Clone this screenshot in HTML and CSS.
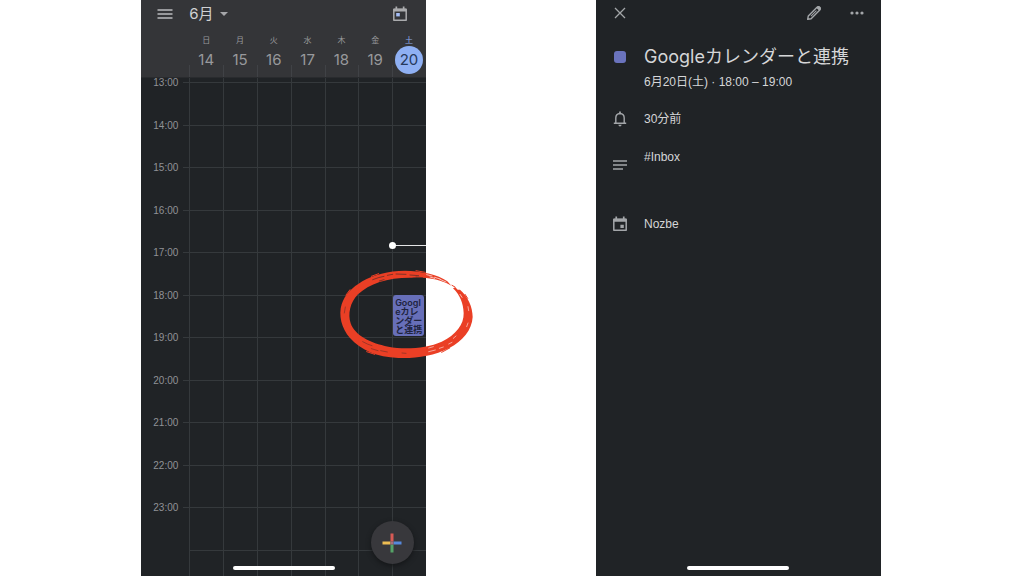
FILE: index.html
```html
<!DOCTYPE html>
<html lang="ja">
<head>
    <meta charset="utf-8">
    <meta name="viewport" content="width=device-width, initial-scale=1">
    <title>Googleカレンダーと連携</title>
    <link rel="stylesheet" href="styles.css">
</head>
<body>
    <main class="page">
        <section class="phone week">
            <header class="week-header">
                <div class="toolbar">
                    <button type="button" class="icon-button" aria-label="メニュー">
                        <svg width="16" height="12" viewBox="0 0 16 12"><path d="M0.5 2h15M0.5 6h15M0.5 10h15" stroke="#98999c" stroke-width="1.8"/></svg>
                    </button>
                    <button type="button" class="month-button">6月
                        <svg width="8" height="4" viewBox="0 0 8 4"><path d="M0 0h8L4 4z" fill="#a5a6a9"/></svg>
                    </button>
                    <button type="button" class="icon-button today-button" aria-label="今日">
                        <svg width="16" height="16" viewBox="0 0 16 16">
                            <path d="M1.8 3.5h12.4v10.7H1.8z" fill="none" stroke="#aaabad" stroke-width="1.5" stroke-linejoin="round"/>
                            <path d="M1.5 2.5h13v3h-13zM3.5 0.5h1.7v3H3.5zM10.8 0.5h1.7v3h-1.7z" fill="#aaabad"/>
                            <path d="M4.2 7h3.6v3.4H4.2z" fill="#a4bdf5"/>
                        </svg>
                    </button>
                </div>
                <div class="days">
                    <div class="day"><span class="day-name">日</span><span class="day-number">14</span></div>
                    <div class="day"><span class="day-name">月</span><span class="day-number">15</span></div>
                    <div class="day"><span class="day-name">火</span><span class="day-number">16</span></div>
                    <div class="day"><span class="day-name">水</span><span class="day-number">17</span></div>
                    <div class="day"><span class="day-name">木</span><span class="day-number">18</span></div>
                    <div class="day"><span class="day-name">金</span><span class="day-number">19</span></div>
                    <div class="day today"><span class="day-name">土</span><span class="day-number">20</span></div>
                </div>
            </header>

            <div class="schedule">
                <div class="hours">
                    <div class="hour"><span>13:00</span></div>
                    <div class="hour"><span>14:00</span></div>
                    <div class="hour"><span>15:00</span></div>
                    <div class="hour"><span>16:00</span></div>
                    <div class="hour"><span>17:00</span></div>
                    <div class="hour"><span>18:00</span></div>
                    <div class="hour"><span>19:00</span></div>
                    <div class="hour"><span>20:00</span></div>
                    <div class="hour"><span>21:00</span></div>
                    <div class="hour"><span>22:00</span></div>
                    <div class="hour"><span>23:00</span></div>
                    <div class="hour-end"></div>
                </div>
                <div class="columns">
                    <div class="column"></div>
                    <div class="column"></div>
                    <div class="column"></div>
                    <div class="column"></div>
                    <div class="column"></div>
                    <div class="column"></div>
                    <div class="column column-today">
                        <div class="now-line"></div>
                        <div class="event">Googleカレンダーと連携</div>
                        <svg class="marker" width="150" height="130" viewBox="0 0 450 390">
                            <!-- brush ring -->
                            <path fill="#ea3f25" d="M364 152 C335 135 295 126 245 128 C175 127 118 145 84 178 C60 202 53 238 62 265 C74 300 120 325 175 335 C225 344 290 340 335 320 C378 300 402 268 401 235 C400 205 390 180 369 160 L376 157 L383 164 L390 164 C414 185 428 215 428 246 C426 285 398 318 358 339 C310 364 255 371 205 369 C140 366 92 345 60 309 C34 280 25 240 35 208 C45 178 66 158 97 139 C130 119 175 108 225 107 C270 108 325 118 352 139 Z"/>
                            <path fill="none" stroke="#ea3f25" stroke-width="3" stroke-linecap="round" d="M48 180l12-16M124 124l22-8M110 350l24 8M335 352l24-13M366 151l9 5M405 178l8 12M258 107l28 5"/>
                            <!-- dry bristle streaks -->
                            <g fill="none" stroke="#4a2a26" stroke-width="2" stroke-linecap="round">
                                <path d="M128 134q20-8 34-10M172 121l16-3M198 117l30 1M240 120l26 2M148 138l14-4M258 126l20 2"/>
                                <path d="M46 216l-3 18M98 320q16 9 28 12M124 341l20 6M152 347l20 4M216 354l12 1" stroke-width="1.4"/>
                            </g>
                            <g fill="none" stroke="#fff" stroke-width="2" stroke-linecap="round">
                                <path d="M290 119l16 4M300 126l14 4M314 127l16 5M330 133l18 8M340 143l12 5M390 178l6 9"/>
                                <path d="M414 215l2 12M414 264l-4 11M366 322l-10 5M340 336l-12 4M316 345l-20 5M296 339l14-4M378 303l-8 7" stroke-width="1.6"/>
                            </g>
                        </svg>
                    </div>
                </div>
            </div>

            <button type="button" class="add-button" aria-label="予定を追加">
                <svg width="20" height="20" viewBox="0 0 20 20">
                    <path d="M8.5 0.5h3v8h-3z" fill="#d65a55"/>
                    <path d="M0.5 8.5h8v3h-8z" fill="#edbd52"/>
                    <path d="M11.5 8.5h8v3h-8z" fill="#5688dc"/>
                    <path d="M8.5 11.5h3v8h-3z" fill="#55a267"/>
                    <path d="M8.5 8.5h3v3h-3z" fill="#a66f7c"/>
                </svg>
            </button>
            <div class="home-bar"></div>
        </section>

        <section class="phone detail">
            <div class="detail-toolbar">
                <button type="button" class="icon-button" aria-label="閉じる">
                    <svg width="12" height="12" viewBox="0 0 12 12"><path d="M1 1l10 10M11 1L1 11" stroke="#a3a6a9" stroke-width="1.3"/></svg>
                </button>
                <button type="button" class="icon-button edit-button" aria-label="編集">
                    <svg width="16" height="16" viewBox="0 0 16 16">
                        <path d="M1.7 14.3l.6-3.4L11 2.2q1.2-1.1 2.4 0l.4.4q1.1 1.2 0 2.4L5.1 13.7z" fill="none" stroke="#a3a6a9" stroke-width="1.4" stroke-linejoin="round"/>
                        <path d="M10.2 2.8l1.6-1.5q1-.7 2 .2l.8.8q.8 1 .1 1.9l-1.5 1.6zM4.6 10.7l5.5-5.5.7.7-5.5 5.5z" fill="#a3a6a9"/>
                    </svg>
                </button>
                <button type="button" class="icon-button" aria-label="その他">
                    <svg width="14" height="4" viewBox="0 0 14 4"><g fill="#a3a6a9"><circle cx="2" cy="2" r="1.6"/><circle cx="7" cy="2" r="1.6"/><circle cx="12" cy="2" r="1.6"/></g></svg>
                </button>
            </div>

            <div class="row title-row">
                <span class="color-chip"></span>
                <h1>Googleカレンダーと連携</h1>
                <p class="date">6月20日(土) · 18:00 – 19:00</p>
            </div>
            <div class="row">
                <svg width="14" height="16" viewBox="0 0 14 16">
                    <path d="M2.8 12V7q0-4.2 4.2-4.5Q11.2 2.8 11.2 7v5M0.8 12.3h12.4" fill="none" stroke="#a3a6a9" stroke-width="1.4"/>
                    <path d="M6.1 0.6h1.8v2.2H6.1zM5.3 13.7h3.4q-.4 1.7-1.7 1.7t-1.7-1.7z" fill="#a3a6a9"/>
                </svg>
                <p>30分前</p>
            </div>
            <div class="row note-row">
                <svg width="16" height="12" viewBox="0 0 16 12"><path d="M1 2h14M1 6h14M1 10h10" stroke="#a3a6a9" stroke-width="1.5"/></svg>
                <p>#Inbox</p>
            </div>
            <div class="row">
                <svg width="16" height="16" viewBox="0 0 16 16">
                    <path d="M1.8 3.5h12.4v10.7H1.8z" fill="none" stroke="#a3a6a9" stroke-width="1.5" stroke-linejoin="round"/>
                    <path d="M1.5 2.5h13v3.3h-13zM3.4 0.5h1.7v3H3.4zM10.9 0.5h1.7v3h-1.7zM8.4 8.7h3.4v3.2H8.4z" fill="#a3a6a9"/>
                </svg>
                <p>Nozbe</p>
            </div>
            <div class="home-bar"></div>
        </section>
    </main>
</body>
</html>
```
FILE: styles.css
```css
* {
    box-sizing: border-box;
}

body {
    margin: 0;
    background-color: #fff;
    font-family: Inter, "Noto Sans CJK JP", sans-serif;
}

button {
    margin: 0;
    padding: 0;
    border: none;
    background: none;
    color: inherit;
    font: inherit;
    cursor: pointer;
}

svg {
    display: block;
}

h1, p {
    margin: 0;
    font-weight: 400;
}

.page {
    display: grid;
    grid-template-columns: 1fr 1fr;
    column-gap: 23%;
    padding: 0 14% 0 13.8%;
    min-height: 100vh;
}

.phone {
    position: relative;
    background-color: #202326;
    color: #d5d6d8;
}

.home-bar {
    position: absolute;
    bottom: 6px;
    left: 50%;
    width: 102px;
    height: 4px;
    margin-left: -51px;
    border-radius: 2px;
    background-color: #fff;
}

.icon-button {
    display: flex;
    align-items: center;
    justify-content: center;
    width: 24px;
    height: 24px;
}

/* Week view */
.week {
    display: flex;
    flex-direction: column;
}

.week-header {
    height: 78px;
    border-bottom: 1px solid #292b2e;
    background-color: #343538;
}

.toolbar {
    display: flex;
    align-items: center;
    height: 28px;
    padding: 0 14px 0 12px;
}

.month-button {
    display: flex;
    align-items: center;
    gap: 6px;
    margin-left: 12px;
    font-size: 15px;
    line-height: 24px;
    color: #d0d1d3;
}

.today-button {
    margin-left: auto;
}

.days {
    display: grid;
    grid-template-columns: repeat(7, 1fr);
    height: 49px;
    padding: 7px 0 0 48px;
}

.day {
    position: relative;
    display: flex;
    flex-direction: column;
    align-items: center;
    color: #98999c;
}

.day::before {
    content: "";
    position: absolute;
    left: 0;
    bottom: 0;
    width: 1px;
    height: 12px;
    background-color: #404246;
}

.day-name {
    font-size: 8px;
    line-height: 11px;
}

.day-number {
    position: relative;
    width: 28px;
    height: 28px;
    border-radius: 50%;
    font-size: 15px;
    line-height: 28px;
    text-align: center;
}

.today .day-name {
    color: #8fabe8;
}

.today .day-number {
    background-color: #8fb0f3;
    color: #26395c;
}

.schedule {
    flex: 1;
    display: grid;
    grid-template-columns: 48px 1fr;
}

.hours {
    grid-area: 1 / 1 / 2 / 3;
    display: flex;
    flex-direction: column;
    padding: 4px 0 26px;
}

.hour {
    flex: 1;
    display: flex;
    align-items: flex-start;
    min-height: 40px;
    color: #909296;
    font-family: "Liberation Sans", sans-serif;
    font-size: 10px;
    line-height: 12px;
}

.hour span {
    width: 42px;
    margin-top: -5px;
    padding-right: 5px;
    text-align: right;
}

.hour::after {
    content: "";
    flex: 1;
    height: 1px;
    background-color: #35393c;
}

.hour-end {
    height: 1px;
    margin: 0 0 -1px 48px;
    background-color: #35393c;
}

.columns {
    grid-area: 1 / 2;
    display: grid;
    grid-template-columns: repeat(7, 1fr);
}

.column {
    border-left: 1px solid #35393c;
}

.column-today {
    position: relative;
    display: grid;
    grid-template-rows: repeat(11, minmax(0, 1fr));
    padding: 4px 0 26px;
}

.now-line {
    position: absolute;
    grid-row: 4 / 5;
    top: 84%;
    left: 0;
    right: 0;
    height: 1px;
    background-color: #e4e5e6;
}

.now-line::before {
    content: "";
    position: absolute;
    top: -3px;
    left: -4px;
    width: 7px;
    height: 7px;
    border-radius: 50%;
    background-color: #fff;
}

.event {
    grid-row: 6;
    min-height: 0;
    margin: 0 2px 1px 0;
    padding: 3px 0 0 2px;
    overflow: hidden;
    border-radius: 3px;
    background-color: #676fb9;
    color: #20243f;
    font-size: 9px;
    font-weight: 600;
    line-height: 9px;
    word-break: break-all;
}

.marker {
    position: absolute;
    grid-row: 6 / 7;
    top: -60px;
    left: -63px;
    pointer-events: none;
}

.add-button {
    position: absolute;
    right: 12px;
    bottom: 12px;
    display: flex;
    align-items: center;
    justify-content: center;
    width: 43px;
    height: 43px;
    border-radius: 50%;
    background-color: #38383c;
    box-shadow: 0 2px 5px #141618;
}

/* Event detail */
.detail-toolbar {
    display: flex;
    align-items: center;
    gap: 19px;
    height: 25px;
    padding: 0 12px;
}

.edit-button {
    margin-left: auto;
}

.row {
    display: grid;
    grid-template-columns: 48px 1fr;
    align-items: center;
    justify-items: center;
    font-family: "Liberation Sans", "Noto Sans CJK JP", sans-serif;
    font-size: 12px;
    line-height: 20px;
}

.row h1, .row p {
    justify-self: start;
}

.title-row {
    margin: 17px 0;
}

.title-row h1 {
    font-family: Inter, "Noto Sans CJK JP", sans-serif;
    font-size: 18px;
    line-height: 30px;
}

.title-row .date {
    grid-column: 2;
}

.color-chip {
    width: 12px;
    height: 12px;
    border-radius: 3px;
    background-color: #6a73bd;
}

.note-row {
    align-items: start;
    margin: 18px 0 43px;
}

.note-row svg {
    margin-top: 12px;
}
```
